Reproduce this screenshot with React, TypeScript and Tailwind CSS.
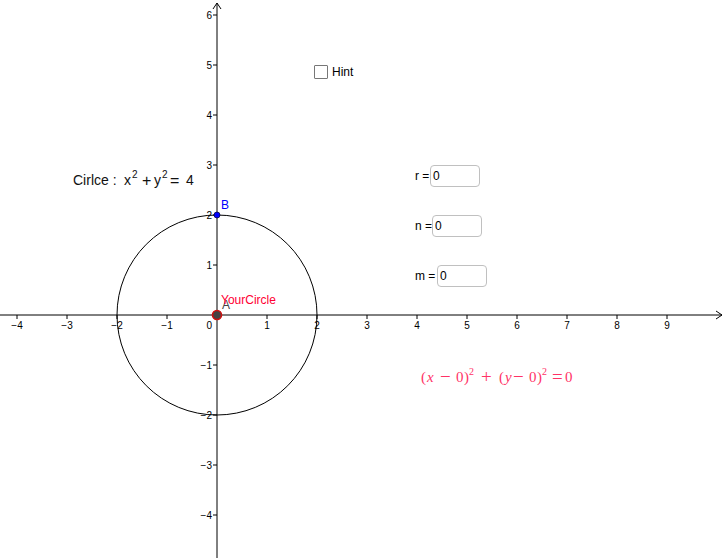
import React from 'react';

const O = { x: 217, y: 315 };
const U = 50;

const xTicks = [-4, -3, -2, -1, 1, 2, 3, 4, 5, 6, 7, 8, 9];
const yTicks = [-4, -3, -2, -1, 1, 2, 3, 4, 5, 6];

const lab = (n: number) => (n < 0 ? `\u2212${-n}` : `${n}`);

// red formula pieces: x, text, kind (i = italic, s = superscript, o = operator)
const redParts: [number, string, string?][] = [
  [421, '('], [427, 'x', 'i'], [440, '−', 'o'], [456, '0'], [464, ')'], [469, '2', 's'],
  [481, '+', 'o'], [499, '('], [505, 'y', 'i'], [513, '−', 'o'], [529, '0'], [537, ')'], [542, '2', 's'],
  [552, '=', 'o'], [565, '0'],
];

function Graph() {
  return (
    <svg width={725} height={558} className="absolute left-0 top-0 font-['Liberation_Sans',sans-serif]">
      {/* axes */}
      <line x1={0} y1={O.y} x2={722} y2={O.y} stroke="#000" strokeWidth={1} />
      <path d="M716 311 L722 315 L716 319" fill="none" stroke="#000" strokeWidth={1} />
      <line x1={O.x} y1={558} x2={O.x} y2={3} stroke="#000" strokeWidth={1} />
      <path d="M213 9 L217 3 L221 9" fill="none" stroke="#000" strokeWidth={1} />
      {xTicks.map((n) => {
        const x = O.x + n * U;
        return (
          <g key={n}>
            <line x1={x} y1={O.y} x2={x} y2={O.y + 4} stroke="#000" />
            <text x={x} y={O.y + 14} fontSize={10} textAnchor="middle">{lab(n)}</text>
          </g>
        );
      })}
      <text x={O.x - 5} y={O.y + 14} fontSize={10} textAnchor="end">0</text>
      {yTicks.map((n) => {
        const y = O.y - n * U;
        return (
          <g key={n}>
            <line x1={O.x - 4} y1={y} x2={O.x} y2={y} stroke="#000" />
            <text x={O.x - 5} y={y + 4} fontSize={10} textAnchor="end">{lab(n)}</text>
          </g>
        );
      })}
      {/* circle */}
      <circle cx={O.x} cy={O.y} r={100} fill="none" stroke="#000" strokeWidth={1} />
      {/* B */}
      <circle cx={O.x} cy={O.y - 100} r={3} fill="#0000ff" stroke="#000033" strokeWidth={0.7} />
      <text x={221} y={209} fontSize={12} fill="#0000ff">B</text>
      {/* A */}
      <text x={222} y={309} fontSize={12} fill="#444">A</text>
      <text x={221} y={304} fontSize={12} fill="#ff0033">YourCircle</text>
      <circle cx={O.x} cy={O.y} r={4.5} fill="#444" stroke="#cc1111" strokeWidth={1.6} />
      {/* circle equation */}
      <g fontSize={14} fill="#111">
        <text x={73} y={185}>Cirlce :</text>
        <text x={124} y={185}>x</text>
        <text x={132} y={178} fontSize={10}>2</text>
        <text x={142} y={186} fontSize={16}>+</text>
        <text x={154} y={185}>y</text>
        <text x={162} y={178} fontSize={10}>2</text>
        <text x={170} y={186} fontSize={16}>=</text>
        <text x={186} y={185}>4</text>
      </g>
      {/* red formula */}
      <g fill="#ff3366" className="font-['Liberation_Serif',serif]">
        {redParts.map(([x, t, k], i) => (
          <text
            key={i}
            x={x}
            y={k === 's' ? 375 : k === 'o' ? 383 : 382}
            fontSize={k === 's' ? 10 : k === 'o' ? 19 : 15}
            fontStyle={k === 'i' ? 'italic' : 'normal'}
          >
            {t}
          </text>
        ))}
      </g>
    </svg>
  );
}

function Box() {
  return (
    <div className="flex h-[22px] w-[50px] items-center rounded-[4px] border border-[#c0c0c0] bg-white pl-[2px]">0</div>
  );
}

export default function App() {
  return (
    <div className="relative h-[558px] w-[725px] overflow-hidden bg-white font-['Liberation_Sans',sans-serif]">
      <Graph />
      <div className="absolute left-[314px] top-[63px] flex items-center gap-[4px] text-[12px] text-black">
        <div className="h-[14px] w-[14px] rounded-[1px] border border-[#777] bg-white" />
        <span>Hint</span>
      </div>
      <div className="absolute left-[415px] top-[165px] flex flex-col gap-[28px] text-[12px] text-black">
        <div className="flex items-center">
          <span className="w-[15px]">r =</span>
          <Box />
        </div>
        <div className="flex items-center">
          <span className="w-[17px]">n =</span>
          <Box />
        </div>
        <div className="flex items-center">
          <span className="w-[22px]">m =</span>
          <Box />
        </div>
      </div>
    </div>
  );
}
